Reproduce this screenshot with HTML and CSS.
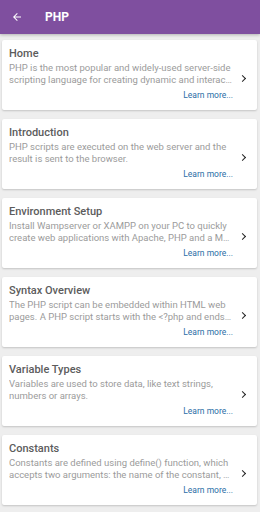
FILE: index.html
```html
<!doctype html>
<html>
<head>
<meta charset="utf-8">
<title>PHP</title>
<link rel="stylesheet" href="styles.css">
</head>
<body>
<div class="bar">
	<a href="javascript:;" class="back">
		<svg width="12" height="12" viewBox="0 0 24 24"><path d="M20 11H7.83l5.59-5.59L12 4l-8 8 8 8 1.41-1.41L7.83 13H20v-2z" fill="#fff"/></svg>
	</a>
	<h1>PHP</h1>
</div>
<div class="list">
	<div class="item">
		<div class="txt">
			<h2>Home</h2>
			<p><span>PHP is the most popular and widely-used server-side</span><span>scripting language for creating dynamic and interactive web pages.</span></p>
			<a href="javascript:;" class="more">Learn more...</a>
		</div>
		<span class="arr"></span>
	</div>
	<div class="item">
		<div class="txt">
			<h2>Introduction</h2>
			<p><span>PHP scripts are executed on the web server and the</span><span>result is sent to the browser.</span></p>
			<a href="javascript:;" class="more">Learn more...</a>
		</div>
		<span class="arr"></span>
	</div>
	<div class="item">
		<div class="txt">
			<h2>Environment Setup</h2>
			<p><span>Install Wampserver or XAMPP on your PC to quickly</span><span>create web applications with Apache, PHP and a MySQL database.</span></p>
			<a href="javascript:;" class="more">Learn more...</a>
		</div>
		<span class="arr"></span>
	</div>
	<div class="item">
		<div class="txt">
			<h2>Syntax Overview</h2>
			<p><span>The PHP script can be embedded within HTML web</span><span>pages. A PHP script starts with the &lt;?php and ends with the ?&gt; tag.</span></p>
			<a href="javascript:;" class="more">Learn more...</a>
		</div>
		<span class="arr"></span>
	</div>
	<div class="item">
		<div class="txt">
			<h2>Variable Types</h2>
			<p><span>Variables are used to store data, like text strings,</span><span>numbers or arrays.</span></p>
			<a href="javascript:;" class="more">Learn more...</a>
		</div>
		<span class="arr"></span>
	</div>
	<div class="item">
		<div class="txt">
			<h2>Constants</h2>
			<p><span>Constants are defined using define() function, which</span><span>accepts two arguments: the name of the constant, and its value.</span></p>
			<a href="javascript:;" class="more">Learn more...</a>
		</div>
		<span class="arr"></span>
	</div>
</div>
</body>
</html>
```

FILE: styles.css
```css
*{margin:0;padding:0;box-sizing:border-box;}
body{background:#eeeeee;font-family:Roboto,'Liberation Sans',sans-serif;width:260px;height:512px;overflow:hidden;}
a{text-decoration:none;}
.bar{height:34px;background:#7f4f9f;display:flex;align-items:center;padding-left:11px;box-shadow:0 1px 3px rgba(0,0,0,.25);}
.back{display:flex;width:12px;height:12px;}
.bar h1{font-size:12px;font-weight:700;color:#fff;margin-left:22px;}
.list{display:flex;flex-direction:column;gap:9px;padding:6px 3px 0 2px;}
.item{height:70px;background:#fff;border-radius:2px;box-shadow:0 1px 2px rgba(0,0,0,.18);display:flex;align-items:center;padding:7px 0 0 7px;}
.txt{flex:1;min-width:0;display:flex;flex-direction:column;align-self:stretch;}
.txt h2{font-size:11px;font-weight:500;line-height:13px;color:#5c5c5c;}
.txt p{font-size:9.5px;line-height:12px;color:#9b9b9b;margin-top:1.5px;height:24px;}
.txt p span{display:block;white-space:nowrap;overflow:hidden;text-overflow:ellipsis;}
.more{align-self:flex-end;font-size:8.5px;line-height:10px;color:#2a6ea6;margin-top:4.5px;}
.arr{width:24px;display:flex;justify-content:center;}
.arr:after{content:'';width:4px;height:4px;border-right:1.6px solid #222;border-top:1.6px solid #222;transform:rotate(45deg);margin-right:5px;}
```
